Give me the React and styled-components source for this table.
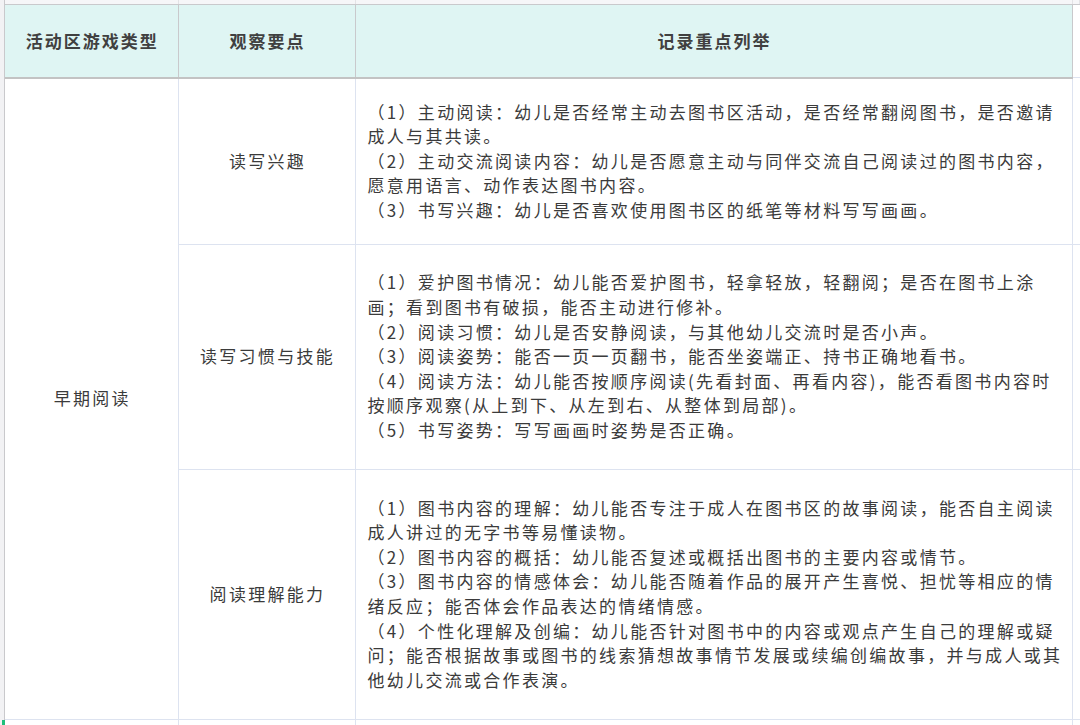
import React from "react";
import styled, { createGlobalStyle } from "styled-components";

const GlobalStyle = createGlobalStyle`
  html, body {
    margin: 0;
    padding: 0;
    background: #ffffff;
    overflow: hidden;
  }
  body {
    font-family: "Noto Sans CJK SC", "Noto Sans", sans-serif;
  }
`;

const Page = styled.div`
  display: flex;
  width: 1080px;
  height: 725px;
  overflow: hidden;
`;

const Gutter = styled.div`
  position: relative;
  width: 4px;
  flex: none;
  background: #f2f2f4;
  border-right: 1px solid #c9c9cc;
`;

const Marker = styled.span`
  position: absolute;
  left: 2px;
  top: 720px;
  width: 3px;
  height: 8px;
  background: #1fbf7a;
`;

const Table = styled.table`
  border-collapse: collapse;
  table-layout: fixed;
  width: 1075px;
  flex: none;
  color: #3b3b3b;
  font-size: 17px;
  letter-spacing: 2.3px;
`;

const StubRow = styled.tr`
  height: 4px;
  td {
    background: #f6f6f8;
    border-right: 1px solid #e3e3e6;
    border-bottom: 1px solid #c9c9cc;
    padding: 0;
  }
`;

const HeadCell = styled.th`
  height: 72px;
  background: #dff5f3;
  border-right: 1px solid #c9c9cc;
  border-bottom: 2px solid #c3c3c3;
  font-weight: 700;
  font-size: 17px;
  letter-spacing: 2px;
  color: #404040;
  text-align: center;
  vertical-align: middle;
  padding: 0 0 0 2px;
`;

const EdgeHead = styled.th`
  background: #ffffff;
  border-bottom: 1px solid #dde3f0;
  padding: 0;
`;

const Cell = styled.td`
  height: ${(p) => p.$h}px;
  border-right: 1px solid #dde3f0;
  border-bottom: 1px solid #dde3f0;
  vertical-align: middle;
  text-align: ${(p) => (p.$left ? "left" : "center")};
  padding: ${(p) => (p.$left ? "0 6px 0 12px" : "0 0 0 2px")};
  line-height: 24.6px;
  word-break: break-all;
  line-break: strict;
`;

const Line = styled.div`
  margin: 0;
`;

const EdgeCell = styled.td`
  border-bottom: 1px solid #dde3f0;
  padding: 0;
`;

const rows = [
  {
    point: "读写兴趣",
    h: 165,
    lines: [
      "（1）主动阅读：幼儿是否经常主动去图书区活动，是否经常翻阅图书，是否邀请成人与其共读。",
      "（2）主动交流阅读内容：幼儿是否愿意主动与同伴交流自己阅读过的图书内容，愿意用语言、动作表达图书内容。",
      "（3）书写兴趣：幼儿是否喜欢使用图书区的纸笔等材料写写画画。",
    ],
  },
  {
    point: "读写习惯与技能",
    h: 224,
    lines: [
      "（1）爱护图书情况：幼儿能否爱护图书，轻拿轻放，轻翻阅；是否在图书上涂画；看到图书有破损，能否主动进行修补。",
      "（2）阅读习惯：幼儿是否安静阅读，与其他幼儿交流时是否小声。",
      "（3）阅读姿势：能否一页一页翻书，能否坐姿端正、持书正确地看书。",
      "（4）阅读方法：幼儿能否按顺序阅读(先看封面、再看内容)，能否看图书内容时按顺序观察(从上到下、从左到右、从整体到局部)。",
      "（5）书写姿势：写写画画时姿势是否正确。",
    ],
  },
  {
    point: "阅读理解能力",
    h: 249,
    lines: [
      "（1）图书内容的理解：幼儿能否专注于成人在图书区的故事阅读，能否自主阅读成人讲过的无字书等易懂读物。",
      "（2）图书内容的概括：幼儿能否复述或概括出图书的主要内容或情节。",
      "（3）图书内容的情感体会：幼儿能否随着作品的展开产生喜悦、担忧等相应的情绪反应；能否体会作品表达的情绪情感。",
      "（4）个性化理解及创编：幼儿能否针对图书中的内容或观点产生自己的理解或疑问；能否根据故事或图书的线索猜想故事情节发展或续编创编故事，并与成人或其他幼儿交流或合作表演。",
    ],
  },
];

export default function App() {
  return (
    <>
      <GlobalStyle />
      <Page>
        <Gutter>
          <Marker />
        </Gutter>
        <Table>
          <colgroup>
            <col style={{ width: 173 }} />
            <col style={{ width: 177 }} />
            <col style={{ width: 717 }} />
            <col />
          </colgroup>
          <tbody>
            <StubRow>
              <td />
              <td />
              <td />
              <td />
            </StubRow>
            <tr>
              <HeadCell>活动区游戏类型</HeadCell>
              <HeadCell>观察要点</HeadCell>
              <HeadCell>记录重点列举</HeadCell>
              <EdgeHead />
            </tr>
            {rows.map((row, i) => (
              <tr key={row.point}>
                {i === 0 && (
                  <Cell rowSpan={3} $h={row.h}>
                    早期阅读
                  </Cell>
                )}
                <Cell $h={row.h}>{row.point}</Cell>
                <Cell $h={row.h} $left>
                  {row.lines.map((t) => (
                    <Line key={t}>{t}</Line>
                  ))}
                </Cell>
                <EdgeCell />
              </tr>
            ))}
            <tr>
              <Cell $h={30} />
              <Cell $h={30} />
              <Cell $h={30} />
              <EdgeCell />
            </tr>
          </tbody>
        </Table>
      </Page>
    </>
  );
}
